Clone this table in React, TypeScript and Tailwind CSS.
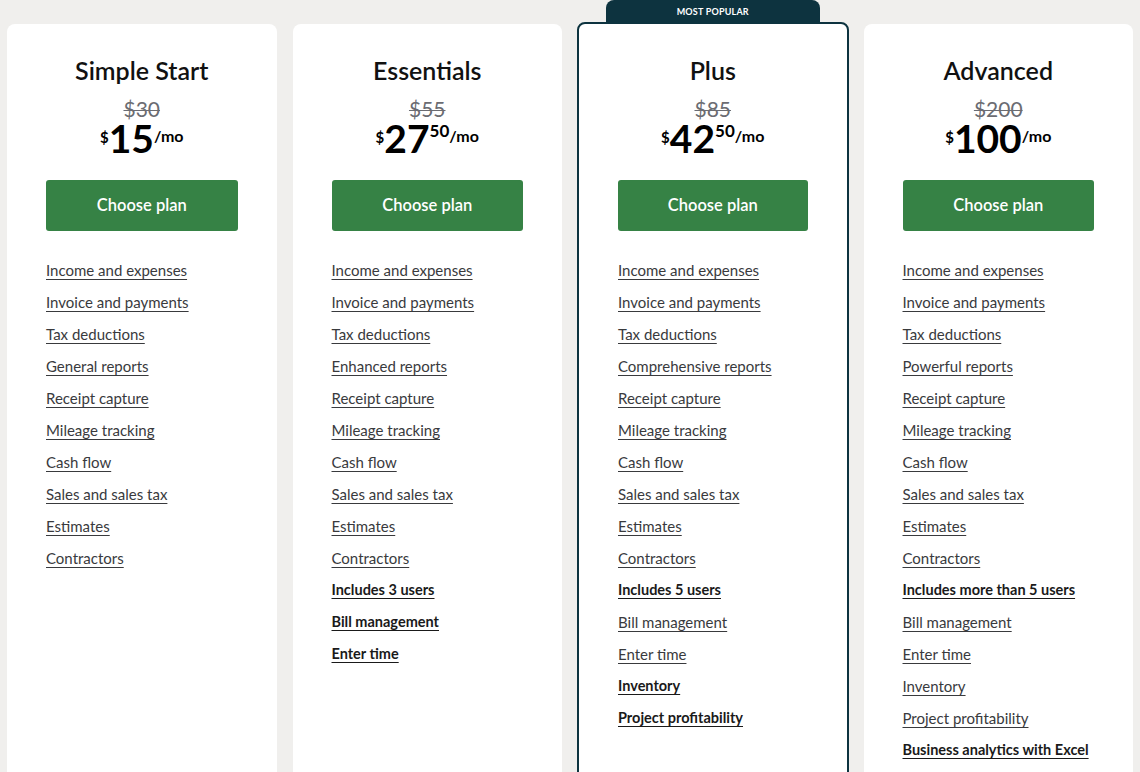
import React from "react"

type Feature = { label: string; bold?: boolean }

type Plan = {
  name: string
  was: string
  dollars: string
  cents?: string
  popular?: boolean
  features: Feature[]
}

const base = [
  "Income and expenses",
  "Invoice and payments",
  "Tax deductions",
]
const tail = [
  "Receipt capture",
  "Mileage tracking",
  "Cash flow",
  "Sales and sales tax",
  "Estimates",
  "Contractors",
]

const f = (labels: string[]): Feature[] => labels.map((label) => ({ label }))

const plans: Plan[] = [
  {
    name: "Simple Start",
    was: "$30",
    dollars: "15",
    features: f([...base, "General reports", ...tail]),
  },
  {
    name: "Essentials",
    was: "$55",
    dollars: "27",
    cents: "50",
    features: [
      ...f([...base, "Enhanced reports", ...tail]),
      { label: "Includes 3 users", bold: true },
      { label: "Bill management", bold: true },
      { label: "Enter time", bold: true },
    ],
  },
  {
    name: "Plus",
    was: "$85",
    dollars: "42",
    cents: "50",
    popular: true,
    features: [
      ...f([...base, "Comprehensive reports", ...tail]),
      { label: "Includes 5 users", bold: true },
      { label: "Bill management" },
      { label: "Enter time" },
      { label: "Inventory", bold: true },
      { label: "Project profitability", bold: true },
    ],
  },
  {
    name: "Advanced",
    was: "$200",
    dollars: "100",
    features: [
      ...f([...base, "Powerful reports", ...tail]),
      { label: "Includes more than 5 users", bold: true },
      { label: "Bill management" },
      { label: "Enter time" },
      { label: "Inventory" },
      { label: "Project profitability" },
      { label: "Business analytics with Excel", bold: true },
    ],
  },
]

function PlanCard({ plan }: { plan: Plan }) {
  return (
    <div className="relative">
      {plan.popular && (
        <div className="absolute left-[28px] right-[28px] top-[-24px] flex h-[24px] items-center justify-center rounded-t-[8px] bg-[#0d333f] text-[9px] font-bold tracking-[0.2px] text-white">
          MOST POPULAR
        </div>
      )}
      <div
        className={
          plan.popular
            ? "relative min-h-[800px] rounded-t-[8px] border-2 border-[#0d333f] bg-white px-[39px] pt-[31px] -mt-[2px] -mx-[1px]"
            : "min-h-[800px] rounded-t-[8px] bg-white px-[39px] pt-[31px]"
        }
      >
        <h2 className="text-center text-[25px] font-semibold leading-[30px] text-[#111]">
          {plan.name}
        </h2>
        <div className="mt-[13px] text-center text-[21px] leading-[22px] text-[#6b6c72] line-through decoration-1">
          {plan.was}
        </div>
        <div className="flex h-[36px] items-start justify-center leading-none text-black">
          <span className="mt-[10px] text-[15px] font-bold">$</span>
          <span className="text-[39px] font-bold leading-[36px]">{plan.dollars}</span>
          {plan.cents && <span className="mt-[2px] text-[17px] font-bold">{plan.cents}</span>}
          <span className="mt-[8px] text-[16px] font-bold">/mo</span>
        </div>
        <button className="mt-[24px] flex h-[51px] w-full items-center justify-center rounded-[3px] bg-[#368245] text-[16.5px] font-semibold text-white">
          Choose plan
        </button>
        <ul className="mt-[29px] flex flex-col gap-[12px]">
          {plan.features.map((item) => (
            <li
              key={item.label}
              className={
                item.bold
                  ? "whitespace-nowrap text-[14.5px] leading-[20px] font-bold text-[#1a1a1a] underline underline-offset-[3px]"
                  : "whitespace-nowrap text-[15px] leading-[20px] text-[#393a3d] underline underline-offset-[3px] decoration-[#393a3d]"
              }
            >
              {item.label}
            </li>
          ))}
        </ul>
      </div>
    </div>
  )
}

export default function App() {
  return (
    <div
      className="h-[772px] overflow-hidden bg-[#f0efed] px-[7px] pt-[24px]"
      style={{ fontFamily: "Lato, 'Noto Sans', sans-serif" }}
    >
      <div className="grid grid-cols-4 gap-[16px]">
        {plans.map((p) => (
          <PlanCard key={p.name} plan={p} />
        ))}
      </div>
    </div>
  )
}
